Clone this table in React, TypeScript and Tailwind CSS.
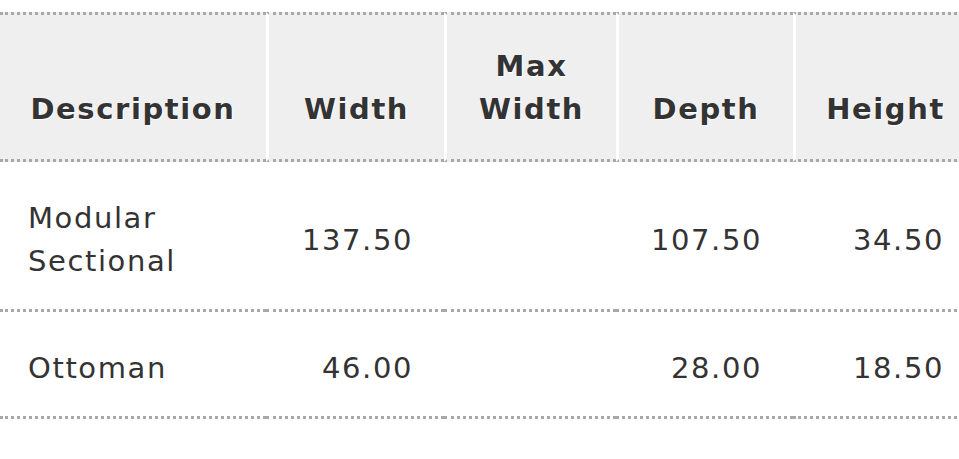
import React from 'react';

type Row = {
    name: string[],
    width: string,
    maxWidth: string,
    depth: string,
    height: string
}

const rows: Row[] = [
    { name: ['Modular', 'Sectional'], width: '137.50', maxWidth: '', depth: '107.50', height: '34.50' },
    { name: ['Ottoman'], width: '46.00', maxWidth: '', depth: '28.00', height: '18.50' },
];

const th = 'align-bottom bg-[#efefef] pt-[30px] pb-[28px] px-[20px] text-center font-bold text-[#333] border-t-[3px] border-b-[3px] border-dotted border-t-[#a8a8a8] border-b-[#a8a8a8] [text-shadow:1px_1px_1px_#fff]';
const sep = 'border-l-[3px] border-l-white [border-left-style:solid]';
const td = 'align-middle pt-[35px] pb-[26px] pl-[28px] pr-[31px] border-b-[3px] border-dotted border-b-[#a8a8a8]';

const App = () => {
    return (
        <div className="w-full overflow-hidden bg-white pt-[12px] font-['DejaVu_Sans',Verdana,sans-serif] text-[29px] leading-[43px] tracking-[1.6px] text-[#333]">
            <table className="w-[975px] table-fixed border-separate border-spacing-0">
                <thead>
                    <tr>
                        <th className={`${th} w-[266px]`}>Description</th>
                        <th className={`${th} ${sep} w-[178px]`}>Width</th>
                        <th className={`${th} ${sep} w-[172px]`}>Max<br />Width</th>
                        <th className={`${th} ${sep} w-[177px]`}>Depth</th>
                        <th className={`${th} ${sep} w-[182px]`}>Height</th>
                    </tr>
                </thead>
                <tbody>
                    {rows.map((r) => (
                        <tr key={r.name.join(' ')}>
                            <td className={`${td} text-left`}>
                                {r.name.map((n, i) => (
                                    <div key={i}>{n}</div>
                                ))}
                            </td>
                            <td className={`${td} text-right`}>{r.width}</td>
                            <td className={`${td} text-right`}>{r.maxWidth}</td>
                            <td className={`${td} text-right`}>{r.depth}</td>
                            <td className={`${td} text-right`}>{r.height}</td>
                        </tr>
                    ))}
                </tbody>
            </table>
        </div>
    );
};

export default App;
